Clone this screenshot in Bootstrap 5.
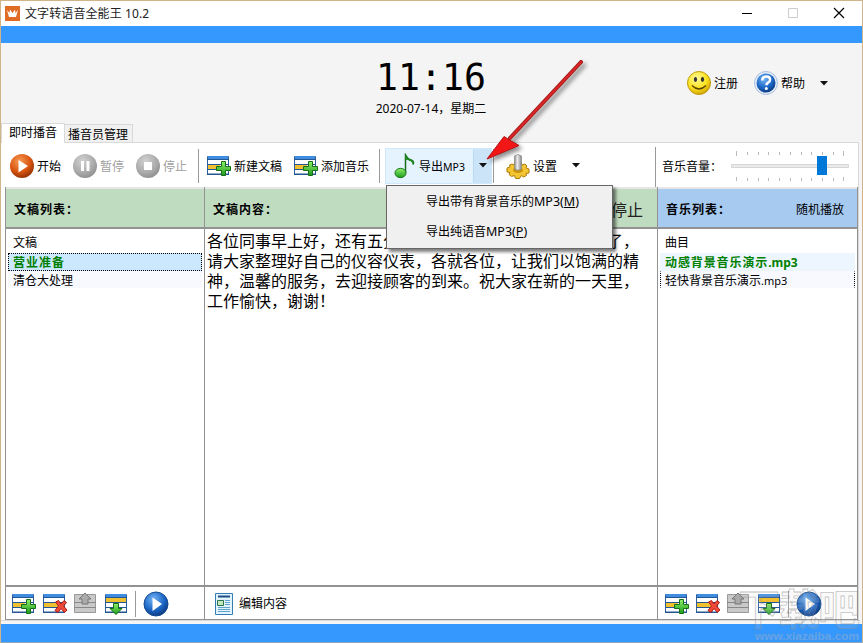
<!DOCTYPE html>
<html lang="zh-CN">
<head>
<meta charset="utf-8">
<title>文字转语音全能王 10.2</title>
<link href="https://cdn.jsdelivr.net/npm/bootstrap@5.3.0/dist/css/bootstrap.min.css" rel="stylesheet">
<style>
body{width:863px;height:643px;overflow:hidden;font:12px/16px "Noto Sans","Noto Sans CJK SC",sans-serif;color:#000;background:#fff}
.win{width:863px;height:643px;border:1px solid #d2b48b;border-bottom-color:#8ca9c4;background:#f5f5f5}
.titlebar{height:25px;padding-left:4px;background:#fff}
.titlebar .caption{font-size:12px;color:#222;margin-left:5px;letter-spacing:.1px}
.wbtn{width:46px;height:25px}
.band{height:17px;background:#3598fe}
.banner{height:99px;background:#f4f4f4}
.clock{left:0;width:860px;top:16px}
.clock .digits{font:36.5px/38px "DejaVu Sans Mono",monospace}
.clock .day{margin-top:3px;line-height:18px}
.userbar{right:34px;top:28px;height:24px}
.tab1,.tab2{border:1px solid #d9d9d9;border-bottom:0}
.tab1{width:64px;height:20px;background:#fff;padding-left:7px;line-height:18px;margin-bottom:-1px;z-index:2;position:relative}
.tab2{width:68px;height:18px;background:#f0f0f0;padding-left:3px;line-height:19px;border-left:0}
.page{height:479px;border:1px solid #d9d9d9;border-left:0;margin-right:3px;background:#fff;padding-left:4px}
.toolbar{height:44px;padding-top:1px}
.tool{height:36px}
.tool .lbl{margin-left:4px}
.tool>span:not(.split),.vol{padding-top:2px}
.vr2{width:1px;height:34px;background:#999}
.grid3{display:grid;grid-template-columns:199px 453px 201px;height:433px}
.pane{border-left:1px solid #929292;border-right:0;display:flex;flex-direction:column}
.pane.last{border-right:1px solid #929292}
.phead{height:42px;border-top:2px solid #e6e6e6;border-bottom:2px solid #929292;background:#c0dcc0;padding:4px 8px 0;font-weight:700;letter-spacing:1px}
.phead span{letter-spacing:0}
.phead.blue{background:#a6caf0}
.pbody{height:358px;background:#fff;border-bottom:2px solid #929292}
.pfoot{height:33px;border-bottom:1px solid #929292;padding:1px 0 0 6px}
.pfoot svg+svg{margin-left:7px}
.line{height:17px;line-height:17px;padding-left:4px;border:1px solid transparent}
.line.hd{height:18px;margin-top:4px;line-height:18px}
.on{color:#008000;font-weight:700}
.on span{letter-spacing:1px}
.sel{background:#cce8ff;border:1px dotted #000;height:18px}
.alt{background:#f7f9fe}
.article{font:16px/20px "Noto Sans CJK SC",sans-serif;padding:1px 0 0 2px;white-space:pre;overflow:hidden}
.drop{left:386px;top:185px;width:227px;height:64px;background:#f0f0f0;border:1px solid #666;box-shadow:3px 3px 3px rgba(0,0,0,.5);padding-left:39px;z-index:5}
.drop div{height:30px;line-height:31px}
.drop b{font-weight:400;font-size:12.5px}
.arrow{left:470px;top:50px;z-index:6}
.wmark{right:0;bottom:0;z-index:7}
.export{width:107px;border:1px solid #d0e8fb;background:#e5f3ff}
.export .split{width:18px;background:#cce4f7;border-left:1px solid #b8dcf8}
</style>
<script src="https://cdn.jsdelivr.net/npm/bootstrap@5.3.0/dist/js/bootstrap.bundle.min.js"></script>
</head>
<body>
<svg width="0" height="0" class="position-absolute">
<defs>
<radialGradient id="og" cx=".4" cy=".3" r=".75"><stop offset="0" stop-color="#f79a55"/><stop offset=".6" stop-color="#d9540f"/><stop offset="1" stop-color="#8a2f05"/></radialGradient>
<radialGradient id="gg" cx=".4" cy=".3" r=".75"><stop offset="0" stop-color="#d2d2d2"/><stop offset=".65" stop-color="#a9a9a9"/><stop offset="1" stop-color="#8c8c8c"/></radialGradient>
<radialGradient id="bg" cx=".4" cy=".3" r=".75"><stop offset="0" stop-color="#72b4f4"/><stop offset=".6" stop-color="#1b66c6"/><stop offset="1" stop-color="#0a3478"/></radialGradient>
<radialGradient id="yg" cx=".4" cy=".3" r=".75"><stop offset="0" stop-color="#fffb9a"/><stop offset=".6" stop-color="#fbe11c"/><stop offset="1" stop-color="#c99a05"/></radialGradient>
<linearGradient id="grn" x2="0" y2="1"><stop offset="0" stop-color="#8ff06a"/><stop offset="1" stop-color="#1c9a1c"/></linearGradient>
<linearGradient id="mt"><stop offset="0" stop-color="#888"/><stop offset=".4" stop-color="#eee"/><stop offset="1" stop-color="#888"/></linearGradient>
<symbol id="sheet" viewBox="0 0 24 24"><path fill="#fff" stroke="#2d5f9e" d="M.5 2.500h21v18H.5z"/><path fill="#3f8ce0" d="M1 2h20v3H1z"/><path fill="#245791" d="M0 5h22v1H0zM0 10h22v1H0zM0 15h22v1H0zM0 19.500h22v1.500H0z"/></symbol>
<symbol id="add" viewBox="0 0 24 24"><use href="#sheet"/><path fill="#f0c030" d="M1 11h12v4H1z"/><path fill="url(#grn)" stroke="#157015" d="M14.500 7.500h4v5h5v4h-5v5h-4v-5h-5v-4h5z"/></symbol>
<symbol id="del" viewBox="0 0 24 24"><use href="#sheet"/><path fill="#f0c030" d="M1 11h14v4H1z"/><path fill="#f04a38" stroke="#b01810" d="M12.500 10l3-1.500L18 12l3-3.500 2.500 2-3 3.500 3.500 4-2.500 2.500-3.500-4-3 4-3-2 3.500-4.500z"/></symbol>
<symbol id="up" viewBox="0 0 24 24"><path fill="#c9c9c9" stroke="#999" d="M.5 2.500h21v18H.5z"/><path fill="#888" d="M0 10h22v1H0zM0 15h22v1H0z"/><path fill="#aaa" stroke="#777" d="M11 1l6 6h-3v5H8V7H5z"/></symbol>
<symbol id="down" viewBox="0 0 24 24"><use href="#sheet"/><path fill="#f0c030" d="M1 6h20v4H1z"/><path fill="url(#grn)" stroke="#157015" d="M8.500 11.500h5v5h3.500l-6 6-6-6h3.500z"/></symbol>
<symbol id="play" viewBox="0 0 26 26"><circle cx="13" cy="13" r="12" fill="url(#bg)" stroke="#174b91"/><path fill="#fff" d="M9.500 6.500L19 13l-9.500 7z"/></symbol>
<symbol id="caret" viewBox="0 0 8 5"><path d="M0 0h8L4 4.500z" fill="#111"/></symbol>
</defs>
</svg>

<div class="win position-relative">
  <div class="titlebar d-flex align-items-center">
    <svg width="15" height="15" viewBox="0 0 15 15"><rect width="15" height="15" fill="#df6b24"/><path d="M2 4l2.500 3L5 3.500 7.500 7 10 3.500l.5 3.500L13 4l-2 7H4z" fill="#fff"/></svg>
    <span class="caption">文字转语音全能王 10.2</span>
    <svg class="wbtn ms-auto" viewBox="0 0 46 25"><path d="M18 12.500h10" stroke="#000"/></svg>
    <svg class="wbtn" viewBox="0 0 46 25"><path d="M18.500 7.500h9v9h-9z" fill="none" stroke="#ccc"/></svg>
    <svg class="wbtn" viewBox="0 0 46 25"><path d="M18 7l10 10M28 7L18 17" stroke="#000" stroke-width="1.200"/></svg>
  </div>
  <div class="band"></div>
  <div class="banner position-relative d-flex align-items-end">
    <div class="clock position-absolute text-center"><div class="digits">11:16</div><div class="day">2020-07-14，星期二</div></div>
    <div class="userbar position-absolute d-flex align-items-center">
      <svg width="24" height="24" viewBox="0 0 24 24"><circle cx="12" cy="12" r="11.500" fill="url(#yg)" stroke="#c09a10"/><ellipse cx="8.500" cy="8.500" rx="1.600" ry="2.400" fill="#333"/><ellipse cx="15.500" cy="8.500" rx="1.600" ry="2.400" fill="#333"/><path d="M5 14.500q7 7 14 0" fill="none" stroke="#5a4300" stroke-width="1.300"/></svg>
      <span style="margin:2px 0 0 3px">注册</span>
      <svg style="margin-left:16px" width="24" height="24" viewBox="0 0 24 24"><circle cx="12" cy="12" r="11.500" fill="#e4ecf8" stroke="#a8bede"/><circle cx="12" cy="12" r="9.500" fill="url(#bg)"/><path d="M8.300 9.500q0-4 4-4 3.800 0 3.800 3.200 0 1.800-2 2.900-1.700.9-1.700 2.600" fill="none" stroke="#fff" stroke-width="2.500"/><circle cx="12.300" cy="17.600" r="1.500" fill="#fff"/></svg>
      <span style="margin:2px 0 0 3px">帮助</span>
      <svg style="margin-left:15px" width="8" height="5"><use href="#caret"/></svg>
    </div>
    <div class="tab1">即时播音</div><div class="tab2">播音员管理</div>
  </div>
  <div class="page">
    <div class="toolbar d-flex align-items-center">
      <div class="tool d-flex align-items-center" style="margin-left:4px"><svg width="26" height="26" viewBox="0 0 26 26"><circle cx="13" cy="13" r="12" fill="url(#og)"/><path fill="#fff" d="M9.500 7L19 13l-9.500 6.500z"/></svg><span style="margin-left:2px">开始</span></div>
      <div class="tool d-flex align-items-center" style="margin-left:11px;color:#a0a0a0"><svg width="26" height="26" viewBox="0 0 26 26"><circle cx="13" cy="13" r="12" fill="url(#gg)"/><path fill="#fff" d="M9 8h3v10H9zM14.500 8h3v10h-3z"/></svg><span style="margin-left:2px">暂停</span></div>
      <div class="tool d-flex align-items-center" style="margin-left:11px;color:#a0a0a0"><svg width="26" height="26" viewBox="0 0 26 26"><circle cx="13" cy="13" r="12" fill="url(#gg)"/><path fill="#fff" d="M9 9h8v8H9z"/></svg><span style="margin-left:2px">停止</span></div>
      <div class="vr2" style="margin-left:11px"></div>
      <div class="tool d-flex align-items-center" style="margin-left:8px"><svg width="24" height="24"><use href="#add"/></svg><span style="margin-left:3px">新建文稿</span></div>
      <div class="tool d-flex align-items-center" style="margin-left:12px"><svg width="24" height="24"><use href="#add"/></svg><span style="margin-left:3px">添加音乐</span></div>
      <div class="vr2" style="margin-left:10px"></div>
      <div class="tool export d-flex align-items-center" style="margin-left:5px">
        <svg width="24" height="26" viewBox="0 0 24 26" style="margin-left:7px"><path d="M12.500 20V2q3 5 6 5.500 3 1 1.500 4" fill="none" stroke="#176a17" stroke-width="1.500"/><path d="M12 1q2 4.500 6 5 4.500 1.500 2 6-1-4-4-4.500-3-.5-4-2z" fill="#208720"/><ellipse cx="7.500" cy="20" rx="5.500" ry="4.700" fill="url(#grn)" stroke="#187518"/></svg>
        <span style="margin-left:2px">导出<span style="font-size:10.500px">MP3</span></span>
        <span class="split h-100 ms-auto d-flex align-items-center justify-content-center"><svg width="8" height="5"><use href="#caret"/></svg></span>
      </div>
      <div class="vr2" style="margin-left:1px"></div>
      <div class="tool d-flex align-items-center" style="margin-left:12px"><svg width="24" height="26" viewBox="0 0 24 26"><path d="M9 9h6l1 3 3-1 2 2-1 2 3 1v4l-3 .5.500 2-3 1.500-2-1.500-2 3h-4l-1-3-3 1-2.500-2 1-2L1 19v-4l3-1-.500-2L6 11l2.500 1z" fill="#f2c531" stroke="#ae7d0b"/><ellipse cx="12" cy="17" rx="5" ry="3" fill="#c8930e"/><path d="M8.500 3q3.500-3 7 0v13q-3.500 2.500-7 0z" fill="url(#mt)" stroke="#888" stroke-width=".7"/></svg><span style="margin-left:3px">设置</span><svg width="8" height="5" style="margin-left:15px"><use href="#caret"/></svg></div>
      <div class="vr2" style="margin-left:75px;height:40px;margin-top:3px"></div>
      <span class="vol" style="margin-left:6px">音乐音量：</span>
      <svg class="flex-shrink-0" width="119" height="32" viewBox="0 0 119 32" style="margin:2px 0 0 9px"><path d="M5.500 0v5M16.500 1v3M27.500 1v3M37.500 1v3M48.500 1v3M59.500 1v3M70.500 1v3M80.500 1v3M91.500 1v3M102.500 1v3M112.500 0v5M5.500 26v4M16.500 27v3M27.500 27v3M37.500 27v3M48.500 27v3M59.500 27v3M70.500 27v3M80.500 27v3M91.500 27v3M102.500 27v3M112.500 26v4" stroke="#bbb"/><path d="M.5 13.500h117v3H.5z" fill="#e9e9e9" stroke="#d6d6d6"/><path d="M86 5h10v19H86z" fill="#0078d7"/></svg>
    </div>
    <div class="grid3">
      <div class="pane">
        <div class="phead d-flex align-items-center">文稿列表：</div>
        <div class="pbody" style="padding:0 2px 0 2px"><div class="line hd">文稿</div><div class="line on sel" style="margin-top:2px"><span>营业准备</span></div><div class="line alt">清仓大处理</div></div>
        <div class="pfoot d-flex align-items-center"><svg width="24" height="24"><use href="#add"/></svg><svg width="24" height="24"><use href="#del"/></svg><svg width="24" height="24"><use href="#up"/></svg><svg width="24" height="24"><use href="#down"/></svg><div class="vr2" style="height:26px;margin:0 7px 0 6px"></div><svg width="26" height="26"><use href="#play"/></svg></div>
      </div>
      <div class="pane">
        <div class="phead d-flex align-items-center justify-content-between">文稿内容：<span class="fw-normal" style="font-size:16px;margin-right:6px;color:#222">停止</span></div>
        <div class="pbody article">各位同事早上好，还有五分钟我们就要正式开始营业时间了，
请大家整理好自己的仪容仪表，各就各位，让我们以饱满的精
神，温馨的服务，去迎接顾客的到来。祝大家在新的一天里，
工作愉快，谢谢！</div>
        <div class="pfoot d-flex align-items-center" style="padding-left:10px"><svg width="18" height="22" viewBox="0 0 18 22"><path d="M.5.5h17v21H.5z" fill="#e2f3fd" stroke="#347db2"/><path d="M3 3.500h12" stroke="#1c4f86" stroke-width="2"/><path d="M2.500 7.500h6v5h-6z" fill="#c4e8c0" stroke="#26764a"/><path d="M10 7.500h5M10 9.500h5M10 11.500h5M3 14.500h12M3 16.500h12M3 18.500h12" stroke="#5da4d0"/></svg><span style="margin-left:6px">编辑内容</span></div>
      </div>
      <div class="pane last">
        <div class="phead blue d-flex align-items-center justify-content-between">音乐列表：<span class="fw-normal" style="margin-right:5px">随机播放</span></div>
        <div class="pbody" style="padding:0 2px 0 2px"><div class="line hd">曲目</div><div class="line on" style="margin-top:2px;height:18px;background:#edf5ff"><span style="letter-spacing:.9px">动感背景音乐演示</span>.mp3</div><div class="line alt" style="border-left:1px dotted #000;border-right:1px dotted #000">轻快背景音乐演示<span style="font-size:11px">.mp3</span></div></div>
        <div class="pfoot d-flex align-items-center" style="padding-left:7px"><svg width="24" height="24"><use href="#add"/></svg><svg width="24" height="24"><use href="#del"/></svg><svg width="24" height="24"><use href="#up"/></svg><svg width="24" height="24"><use href="#down"/></svg><div class="vr2" style="height:26px;margin:0 7px 0 6px"></div><svg width="26" height="26"><use href="#play"/></svg></div>
      </div>
    </div>
  </div>
  <div class="band" style="margin-top:3px;height:18px"></div>
</div>
<div class="drop position-absolute"><div>导出带有背景音乐的<b>MP3(<u>M</u>)</b></div><div>导出纯语音<b>MP3(<u>P</u>)</b></div></div>
<svg class="arrow position-absolute" width="125" height="120" viewBox="0 0 125 120" style="filter:drop-shadow(3px 3px 2px rgba(0,0,0,.45))"><path d="M111 12L40 88" stroke="#a01818" stroke-width="4" stroke-linecap="round"/><path d="M111 12L40 88" stroke="#dc2626" stroke-width="2" stroke-linecap="round"/><path d="M17 109L34 86.500 39.500 90 49 95.500z" fill="#f31616" stroke="#b51212"/></svg>
<svg class="wmark position-absolute" width="130" height="60" viewBox="0 0 130 60"><text x="5" y="42" font-size="42" font-family="Noto Sans CJK SC,sans-serif" font-weight="700" textLength="122" fill="#ddd" fill-opacity=".15" stroke="#888" stroke-opacity=".5" stroke-width=".8">下载吧</text><text x="22" y="57" font-size="11" font-weight="700" font-family="Liberation Sans,sans-serif" textLength="104" lengthAdjust="spacingAndGlyphs" fill="#9bbfe8" fill-opacity=".45" stroke="#6d8fb5" stroke-opacity=".5" stroke-width=".4">www.xiazaiba.com</text></svg>
</body>
</html>
